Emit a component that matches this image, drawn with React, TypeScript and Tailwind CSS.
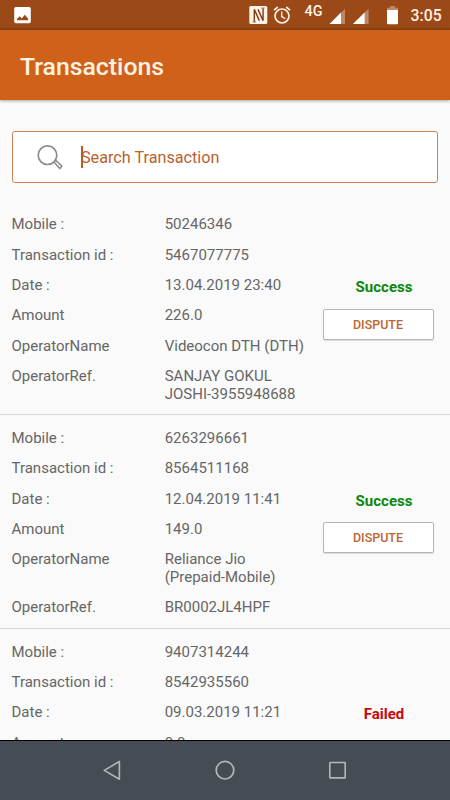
import React from "react";

type Transaction = {
  mobile: string;
  id: string;
  date: string;
  amount: string;
  operator?: string[];
  reference?: string[];
  status: "Success" | "Failed";
};

const transactions: Transaction[] = [
  {
    mobile: "50246346",
    id: "5467077775",
    date: "13.04.2019 23:40",
    amount: "226.0",
    operator: ["Videocon DTH (DTH)"],
    reference: ["SANJAY GOKUL", "JOSHI-3955948688"],
    status: "Success",
  },
  {
    mobile: "6263296661",
    id: "8564511168",
    date: "12.04.2019 11:41",
    amount: "149.0",
    operator: ["Reliance Jio", "(Prepaid-Mobile)"],
    reference: ["BR0002JL4HPF"],
    status: "Success",
  },
  {
    mobile: "9407314244",
    id: "8542935560",
    date: "09.03.2019 11:21",
    amount: "0.0",
    status: "Failed",
  },
];

function StatusBar() {
  return (
    <div className="flex h-[30px] shrink-0 bg-[#9a4917]">
      <svg width="450" height="30" viewBox="0 0 450 30">
        <defs>
          <linearGradient id="edge" x1="0" y1="0" x2="0" y2="1">
            <stop offset="0" stopColor="#7c3a10" stopOpacity="0" />
            <stop offset="1" stopColor="#7c3a10" stopOpacity="0.7" />
          </linearGradient>
        </defs>
        <rect y="27" width="450" height="3" fill="url(#edge)" />
        <rect x="14.2" y="7" width="16.6" height="16.2" rx="1.8" fill="#fff" />
        <path d="M17 20.2v-1.5l2.8-2.4 2 2.1 3-3.6 3.4 4v1.4z" fill="#9a4917" />
        <rect x="249.3" y="6" width="18" height="18" rx="1.6" fill="#fdf3e6" />
        <path d="M254.3 21.6V9.4l5.1 11.2M263.1 8.4v12.2l-5.1-11.2" fill="none" stroke="#7d3d17" strokeWidth="1.4" />
        <path d="M252.6 21.9h3.4M261.2 8.1h3.4" stroke="#7d3d17" strokeWidth="0.8" />
        <g fill="none" stroke="#fdf0e2" strokeWidth="1.7">
          <circle cx="282" cy="16" r="7" />
          <path d="M281.7 11.6v4.9l3.5 2.1" strokeWidth="1.4" />
          <path d="M274 10.2l3.8-3.2M290 10.2l-3.8-3.2" />
        </g>
        <text x="304.5" y="16.3" fontSize="14.4" fontWeight="500" fontFamily="Roboto, sans-serif" fill="#fdf3e6">4G</text>
        <path d="M345 8.7V24H329.5z" fill="#bd8768" />
        <path d="M341 12.6V24H329.5z" fill="#fff" />
        <path d="M368.6 8.7V24H353z" fill="#bd8768" />
        <path d="M364.6 12.6V24H353z" fill="#fff" />
        <path d="M390 6h5v1.8h3v2.8h-11V7.8h3z" fill="#bd8768" />
        <path d="M387 10h11v13.3q0 1-1 1h-9q-1 0-1-1z" fill="#fff" />
        <text x="410.6" y="21" fontSize="15.8" fontWeight="500" fontFamily="Roboto, sans-serif" fill="#fdf0e2">3:05</text>
      </svg>
    </div>
  );
}

function SearchField() {
  return (
    <div className="mx-3 mt-[31px] flex h-[52px] shrink-0 items-center rounded-[3px] border border-[#c98250] bg-white pl-6">
      <svg width="28" height="28" viewBox="0 0 28 28" fill="none" stroke="#8b8b8b">
        <circle cx="10.5" cy="12.2" r="9.3" strokeWidth="1.7" />
        <path d="M16.9 19l1.7-1.7 6.3 5.8-2 2.4z" strokeWidth="1.5" />
      </svg>
      <div className="ml-4 h-[22px] w-[2px] bg-[#bd5a1c]" />
      <span className="-ml-[2px] pt-[2px] text-[16.2px] leading-[20px] text-[#b9622f]">Search Transaction</span>
    </div>
  );
}

function Row({ label, lines }: { label: string; lines: string[] }) {
  return (
    <div className="flex items-start">
      <span className="w-[153.2px] shrink-0">{label}</span>
      <div className="flex flex-col whitespace-nowrap">
        {lines.map((line) => (
          <span key={line}>{line}</span>
        ))}
      </div>
    </div>
  );
}

function TransactionItem({ item }: { item: Transaction }) {
  const success = item.status === "Success";
  return (
    <div className="flex shrink-0 border-b border-[#d8d8d8] pr-[17px] pb-[11.2px] pl-[11.5px]">
      <div className="flex w-[311px] shrink-0 flex-col gap-[12.9px] pt-[14.6px] text-[15px] leading-[17.5px] text-[#666]">
        <Row label="Mobile :" lines={[item.mobile]} />
        <Row label="Transaction id :" lines={[item.id]} />
        <Row label="Date :" lines={[item.date]} />
        <Row label="Amount" lines={[item.amount]} />
        {item.operator && <Row label="OperatorName" lines={item.operator} />}
        {item.reference && <Row label="OperatorRef." lines={item.reference} />}
      </div>
      <div className="flex w-[111px] shrink-0 flex-col items-center pt-[76.4px]">
        <span className={success ? "pl-3 text-[15px] leading-[18px] font-bold text-[#0b870b]" : "pl-3 text-[15px] leading-[18px] font-bold text-[#c90808]"}>
          {item.status}
        </span>
        {success && (
          <button className="mt-[12.6px] h-[31px] w-full rounded-[2px] border border-[#b5b5b5] bg-white pt-[2px] text-[12.5px] font-medium text-[#bd6530] shadow-[0_1px_1px_rgba(0,0,0,0.12)]">
            DISPUTE
          </button>
        )}
      </div>
    </div>
  );
}

function NavigationBar() {
  return (
    <div className="flex h-[60px] shrink-0 items-center justify-center gap-[84.5px] border-t border-black bg-[#454c53]">
      <svg width="28" height="28" viewBox="0 0 28 28" fill="none" stroke="#b3b7ba" strokeWidth="1.6">
        <path d="M20.4 4.5v17.8L5.2 13.4z" strokeLinejoin="round" />
      </svg>
      <svg width="28" height="28" viewBox="0 0 28 28" fill="none" stroke="#b3b7ba" strokeWidth="1.7">
        <circle cx="14" cy="13.2" r="8.8" />
      </svg>
      <svg width="28" height="28" viewBox="0 0 28 28" fill="none" stroke="#b3b7ba" strokeWidth="1.6">
        <rect x="5.8" y="5.5" width="15.4" height="15.4" rx="0.5" />
      </svg>
    </div>
  );
}

export default function App() {
  return (
    <div className="flex h-[800px] w-[450px] flex-col overflow-hidden bg-[#fafafa] font-[Roboto,sans-serif]">
      <StatusBar />
      <header className="z-10 flex h-[70px] shrink-0 items-center bg-[#d0611b] pt-[4px] pl-5 shadow-[0_1px_3px_rgba(0,0,0,0.35)]">
        <h1 className="text-[24.8px] leading-[30px] font-medium text-[#fff3e4]">Transactions</h1>
      </header>
      <SearchField />
      <main className="mt-[18.6px] flex min-h-0 flex-1 flex-col overflow-hidden">
        {transactions.map((item) => (
          <TransactionItem key={item.id} item={item} />
        ))}
      </main>
      <NavigationBar />
    </div>
  );
}
